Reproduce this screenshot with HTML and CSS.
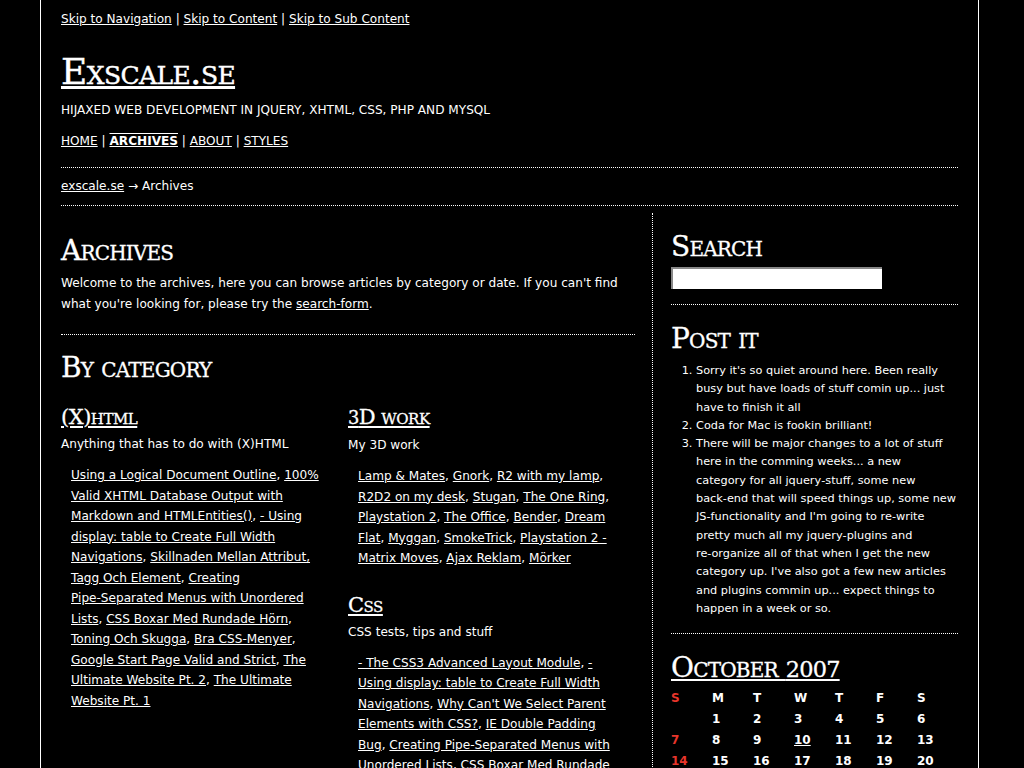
FILE: index.html
```html
<!DOCTYPE html>
<html lang="en">
<head>
<meta charset="utf-8">
<title>Exscale.se - Archives</title>
<link rel="stylesheet" href="styles.css">
</head>
<body>
<div class="page">
  <div class="header">
    <p class="skip"><a href="#nav">Skip to Navigation</a> | <a href="#content">Skip to Content</a> | <a href="#sub">Skip to Sub Content</a></p>
    <h1 class="logo"><a href="#">Exscale.se</a></h1>
    <p class="tagline">HIJAXED WEB DEVELOPMENT IN JQUERY, XHTML, CSS, PHP AND MYSQL</p>
    <p class="nav" id="nav"><a href="#">HOME</a> | <a href="#" class="current">ARCHIVES</a> | <a href="#">ABOUT</a> | <a href="#">STYLES</a></p>
  </div>
  <p class="crumbs"><a href="#">exscale.se</a> → Archives</p>
  <div class="columns">
    <div class="main" id="content">
      <div class="intro">
        <h2 class="heading">Archives</h2>
        <p class="text">Welcome to the archives, here you can browse articles by category or date. If you can't find what you're looking for, please try the <a href="#">search-form</a>.</p>
      </div>
      <h2 class="heading bycat">By category</h2>
      <div class="cats">
        <div class="cat-col">
          <div class="cat">
            <h3 class="cat-title"><a href="#">(X)html</a></h3>
            <p class="cat-desc">Anything that has to do with (X)HTML</p>
            <p class="cat-links"><a href="#">Using a Logical Document Outline</a>, <a href="#">100% Valid XHTML Database Output with Markdown and HTMLEntities()</a>, <a href="#">- Using display: table to Create Full Width Navigations</a>, <a href="#">Skillnaden Mellan Attribut, Tagg Och Element</a>, <a href="#">Creating Pipe&#8209;Separated Menus with Unordered Lists</a>, <a href="#">CSS Boxar Med Rundade Hörn</a>, <a href="#">Toning Och Skugga</a>, <a href="#">Bra CSS&#8209;Menyer</a>, <a href="#">Google Start Page Valid and Strict</a>, <a href="#">The Ultimate Website Pt. 2</a>, <a href="#">The Ultimate Website Pt. 1</a></p>
          </div>
        </div>
        <div class="cat-col">
          <div class="cat">
            <h3 class="cat-title"><a href="#"><span class="fig">3</span>D work</a></h3>
            <p class="cat-desc">My 3D work</p>
            <p class="cat-links"><a href="#">Lamp &amp; Mates</a>, <a href="#">Gnork</a>, <a href="#">R2 with my lamp</a>, <a href="#">R2D2 on my desk</a>, <a href="#">Stugan</a>, <a href="#">The One Ring</a>, <a href="#">Playstation 2</a>, <a href="#">The Office</a>, <a href="#">Bender</a>, <a href="#">Dream Flat</a>, <a href="#">Myggan</a>, <a href="#">SmokeTrick</a>, <a href="#">Playstation 2 - Matrix Moves</a>, <a href="#">Ajax Reklam</a>, <a href="#">Mörker</a></p>
          </div>
          <div class="cat">
            <h3 class="cat-title"><a href="#">Css</a></h3>
            <p class="cat-desc">CSS tests, tips and stuff</p>
            <p class="cat-links"><a href="#">- The CSS3 Advanced Layout Module</a>, <a href="#">- Using display: table to Create Full Width Navigations</a>, <a href="#">Why Can't We Select Parent Elements with CSS?</a>, <a href="#">IE Double Padding Bug</a>, <a href="#">Creating Pipe&#8209;Separated Menus with Unordered Lists</a>, <a href="#">CSS Boxar Med Rundade Hörn</a>, <a href="#">Toning Och Skugga</a>, <a href="#">Bra CSS&#8209;Menyer</a></p>
          </div>
        </div>
      </div>
    </div>
    <div class="side" id="sub">
      <div class="box">
        <h2 class="heading">Search</h2>
        <input class="search" type="text" aria-label="Search">
      </div>
      <div class="box">
        <h2 class="heading">Post it</h2>
        <ol class="posts">
          <li>Sorry it's so quiet around here. Been really busy but have loads of stuff comin up... just have to finish it all</li>
          <li>Coda for Mac is fookin brilliant!</li>
          <li>There will be major changes to a lot of stuff here in the comming weeks... a new <span class="nw">category for</span> all jquery&#8209;stuff, some new back&#8209;end that will speed things up, some new JS&#8209;functionality and I'm going to re&#8209;write pretty much all my jquery&#8209;plugins and re&#8209;organize all of that when I get the new category up. I've also got a few new articles and plugins commin up... expect things to happen in a week or so.</li>
        </ol>
      </div>
      <div class="box last">
        <h2 class="heading"><a href="#">October <span class="fig">2007</span></a></h2>
        <table class="cal">
          <thead>
            <tr><th class="sun">S</th><th>M</th><th>T</th><th>W</th><th>T</th><th>F</th><th>S</th></tr>
          </thead>
          <tbody>
            <tr><td class="sun"></td><td>1</td><td>2</td><td>3</td><td>4</td><td>5</td><td>6</td></tr>
            <tr><td class="sun">7</td><td>8</td><td>9</td><td><a href="#">10</a></td><td>11</td><td>12</td><td>13</td></tr>
            <tr><td class="sun">14</td><td>15</td><td>16</td><td>17</td><td>18</td><td>19</td><td>20</td></tr>
            <tr><td class="sun">21</td><td>22</td><td>23</td><td>24</td><td>25</td><td>26</td><td>27</td></tr>
            <tr><td class="sun">28</td><td>29</td><td>30</td><td>31</td><td></td><td></td><td></td></tr>
          </tbody>
        </table>
      </div>
    </div>
  </div>
</div>
</body>
</html>
```

FILE: styles.css
```css
html, body {
  margin: 0;
  padding: 0;
  background: #000;
}
body {
  color: #fff;
  font-family: "DejaVu Sans", Verdana, sans-serif;
  font-size: 12.1px;
  line-height: 20.5px;
}
a {
  color: #fff;
  text-decoration: underline;
}
p { margin: 0; }

.page {
  width: 897px;
  margin-left: 40px;
  padding: 0 20px;
  border-left: 1px solid #fff;
  border-right: 1px solid #fff;
  min-height: 768px;
}

.header {
  padding-top: 9px;
  padding-bottom: 16px;
  border-bottom: 1px dotted #fff;
}
.skip { line-height: 20px; }
.logo {
  margin: 23px 0 0;
  font-family: "DejaVu Serif", Georgia, serif;
  font-variant: small-caps;
  font-weight: normal;
  font-size: 36px;
  line-height: 40px;
  letter-spacing: -0.6px;
  -webkit-text-stroke: 0.4px #fff;
}
.tagline {
  margin-top: 8px;
  line-height: 20px;
}
.nav {
  margin-top: 11px;
  line-height: 20px;
}
.nav .current {
  font-weight: bold;
  text-decoration: underline overline;
}

.crumbs {
  padding: 8px 0 9px;
  line-height: 20px;
  border-bottom: 1px dotted #fff;
}

.columns {
  display: flex;
  margin-top: 7px;
}
.main {
  width: 574px;
  padding-right: 17px;
}
.side {
  width: 287px;
  padding-left: 18px;
  border-left: 1px dotted #fff;
  padding-bottom: 40px;
}

.heading {
  margin: 0;
  font-family: "DejaVu Serif", Georgia, serif;
  font-variant: small-caps;
  font-weight: normal;
  font-size: 28px;
  line-height: 36px;
  letter-spacing: -0.8px;
  -webkit-text-stroke: 0.3px #fff;
}
.heading .fig { font-size: 0.8em; }

.intro {
  padding-top: 20px;
  padding-bottom: 19px;
  border-bottom: 1px dotted #fff;
}
.intro .text {
  margin-top: 4px;
  line-height: 21px;
}
.bycat { margin-top: 15px; }

.cats {
  display: grid;
  grid-template-columns: 287px 287px;
}
.cat { margin-top: 17px; }
.cat + .cat { margin-top: 22px; }
.cat-title {
  margin: 0;
  font-family: "DejaVu Serif", Georgia, serif;
  font-variant: small-caps;
  font-weight: normal;
  font-size: 21px;
  line-height: 28px;
  letter-spacing: -0.5px;
  -webkit-text-stroke: 0.3px #fff;
}
.cat-title .fig { font-size: 0.85em; }
.cat-desc {
  margin-top: 3px;
  line-height: 20px;
}
.cat-links {
  margin-top: 11px;
  padding-left: 10px;
  padding-right: 17px;
  line-height: 20.5px;
}

.box {
  padding-top: 16px;
  padding-bottom: 15px;
  border-bottom: 1px dotted #fff;
}
.box.last { border-bottom: 0; }
.search {
  display: block;
  margin-top: 2px;
  width: 211px;
  height: 22px;
  box-sizing: border-box;
  border: 0;
  border-top: 2px solid #888;
  border-left: 2px solid #888;
  background: #fff;
  padding: 0;
}
.posts {
  margin: 5px 0 0;
  padding-left: 25px;
  font-size: 11.3px;
  line-height: 18.3px;
}
.nw { white-space: nowrap; }

.cal {
  margin-top: 1px;
  border-collapse: collapse;
  width: 287px;
  table-layout: fixed;
}
.cal th, .cal td {
  width: 41px;
  padding: 0;
  text-align: left;
  font-weight: bold;
  font-size: 12px;
  line-height: 21px;
  height: 21px;
}
.cal th {
  font-weight: 900;
}
.cal .sun { color: #e8352b; }
```
